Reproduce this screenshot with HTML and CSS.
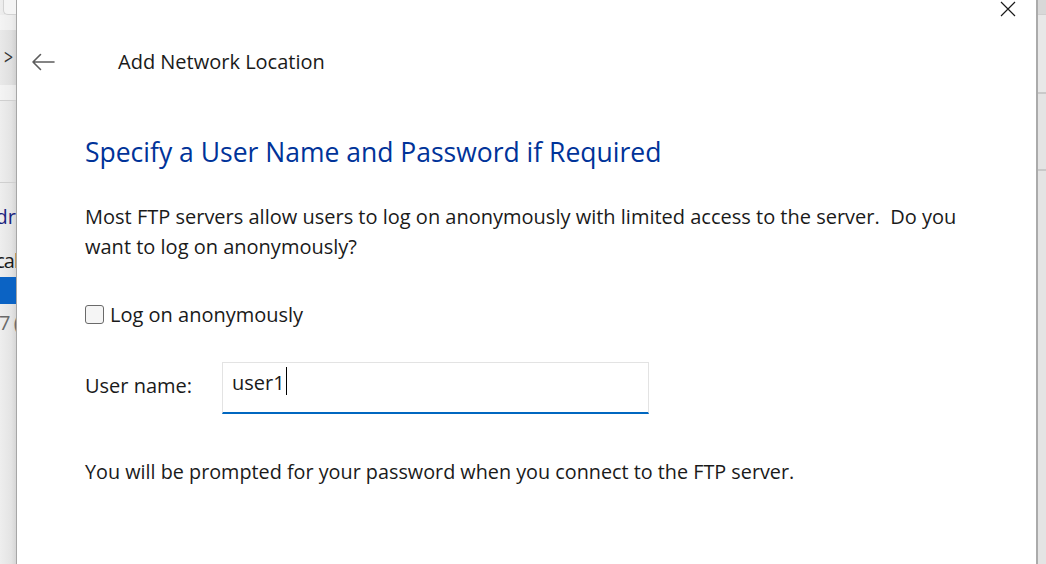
FILE: index.html
```html
<!DOCTYPE html>
<html lang="en">
<head>
<meta charset="utf-8">
<title>Add Network Location</title>
<link rel="stylesheet" href="styles.css">
</head>
<body>
<div class="screen">
  <div class="bg-left">
    <div class="bl-addr"></div>
    <div class="bl-gap"></div>
    <div class="bl-nav"><span class="bl-chev">&gt;</span></div>
    <div class="bl-gap2"></div>
    <div class="bl-tool"></div>
    <div class="bl-list">
      <div class="bl-item bl-link">dr</div>
      <div class="bl-item bl-cal">cal</div>
      <div class="bl-sel"></div>
      <div class="bl-item bl-grey">7 (</div>
    </div>
  </div>
  <div class="dialog">
    <button class="close" aria-label="Close">
      <svg width="16" height="16" viewBox="0 0 16 16"><path d="M1 1 L15 15 M15 1 L1 15" stroke="#1a1a1a" stroke-width="1.2" fill="none"/></svg>
    </button>
    <div class="header">
      <span class="back">
        <svg width="24" height="18" viewBox="0 0 24 18"><path d="M2 9 H23 M9.5 1.5 L2 9 L9.5 16.5" stroke="#5c5c5c" stroke-width="1.6" fill="none" stroke-linejoin="round" stroke-linecap="round"/></svg>
      </span>
      <span class="title">Add Network Location</span>
    </div>
    <div class="content">
      <h1 class="heading">Specify a User Name and Password if Required</h1>
      <p class="para">Most FTP servers allow users to log on anonymously with limited access to the server.&nbsp; Do you<br>want to log on anonymously?</p>
      <label class="check-row"><span class="checkbox"></span><span>Log on anonymously</span></label>
      <div class="user-row">
        <span class="label">User name:</span>
        <div class="textbox"><span class="value">user1</span><span class="caret"></span></div>
      </div>
      <p class="footer-text">You will be prompted for your password when you connect to the FTP server.</p>
    </div>
  </div>
  <div class="bg-right">
    <div class="br-a"></div>
    <div class="br-b"></div>
    <div class="br-c"></div>
  </div>
</div>
</body>
</html>
```
FILE: styles.css
```css
html, body {
  margin: 0;
  padding: 0;
  width: 1046px;
  height: 564px;
  overflow: hidden;
  background: #ffffff;
  font-family: "Open Sans", "Noto Sans", "Liberation Sans", sans-serif;
  color: #1a1a1a;
}

.screen {
  display: flex;
  width: 1046px;
  height: 564px;
}

/* background window, left edge */
.bg-left {
  width: 16px;
  flex: none;
  background: linear-gradient(to right, #eeeeee, #e4e4e4 70%, #d6d6d6);
  display: flex;
  flex-direction: column;
  overflow: hidden;
}
.bl-addr {
  height: 14px;
  margin-left: 3px;
  background: #f4f4f4;
  border: 1px solid #d2d2d2;
  border-top: none;
  border-right: none;
  border-bottom-left-radius: 5px;
}
.bl-gap {
  height: 15px;
  background: rgba(255, 255, 255, 0.35);
}
.bl-nav {
  height: 55px;
  display: flex;
  align-items: center;
  background: rgba(0, 0, 0, 0.02);
}
.bl-chev {
  font-size: 21px;
  line-height: 24px;
  color: #333;
  margin-left: 4px;
  margin-top: -1px;
  transform: scaleX(0.75);
  transform-origin: left center;
}
.bl-gap2 {
  height: 15px;
  background: rgba(255, 255, 255, 0.35);
  border-bottom: 1px solid #cfcfcf;
}
.bl-tool {
  height: 81px;
  border-bottom: 1px solid #cfcfcf;
}
.bl-list {
  padding-top: 22px;
  display: flex;
  flex-direction: column;
  align-items: flex-end;
}
.bl-item {
  height: 24px;
  line-height: 24px;
  font-size: 20px;
  white-space: nowrap;
  color: #1a1a1a;
}
.bl-link { color: #1a237e; }
.bl-cal { margin-top: 20px; margin-right: -2px; letter-spacing: -1px; }
.bl-sel {
  align-self: stretch;
  height: 27px;
  background: #0b63c4;
  margin-top: 4px;
}
.bl-grey { color: #6a6a6a; align-self: flex-start; margin-top: 7px; margin-left: -1px; letter-spacing: -1px; }

/* dialog */
.dialog {
  position: relative;
  flex: 1;
  background: #ffffff;
  border-left: 1px solid #a6a6a6;
  border-right: 2px solid #ababab;
}
.close {
  position: absolute;
  top: 0;
  right: 19px;
  width: 18px;
  height: 18px;
  padding: 1px 0 0 0;
  border: none;
  background: none;
}
.header {
  height: 124px;
  display: flex;
  align-items: center;
  padding-left: 14px;
}
.back {
  width: 24px;
  height: 18px;
  display: flex;
}
.title {
  margin-left: 63px;
  font-size: 20px;
  color: #1a1a1a;
  margin-top: -2px;
}
.content {
  padding-left: 68px;
}
.heading {
  margin: 0;
  height: 56px;
  line-height: 56px;
  font-size: 26.5px;
  font-weight: normal;
  color: #003399;
}
.para {
  margin: 22px 0 0 0;
  font-size: 20px;
  line-height: 30px;
  color: #1a1a1a;
}
.check-row {
  margin-top: 37px;
  height: 30px;
  display: flex;
  align-items: center;
  gap: 6px;
  font-size: 20px;
}
.checkbox {
  width: 17px;
  height: 17px;
  border: 1px solid #6a6a6a;
  border-radius: 3px;
  background: #f5f5f5;
  flex: none;
}
.user-row {
  margin-top: 33px;
  display: flex;
  align-items: flex-start;
}
.label {
  width: 137px;
  font-size: 20px;
  line-height: 30px;
  margin-top: 9px;
}
.textbox {
  width: 416px;
  height: 43px;
  border: 1px solid #e3e3e3;
  border-bottom: 2px solid #0067c0;
  padding: 6px 0 0 9px;
  display: flex;
  align-items: flex-start;
  box-sizing: content-box;
}
.value {
  font-size: 20px;
  line-height: 28px;
  color: #1a1a1a;
}
.caret {
  width: 1px;
  height: 28px;
  background: #000;
  margin-left: 1px;
  margin-top: -2px;
}
.footer-text {
  margin: 43px 0 0 0;
  font-size: 19.8px;
  line-height: 30px;
}

/* background window, right edge */
.bg-right {
  width: 8px;
  flex: none;
  background: #e4e4e4;
  display: flex;
  flex-direction: column;
}
.br-a { height: 14px; background: #d8d8d8; border-bottom: 1px solid #cfcfcf; }
.br-b { height: 77px; background: #e8e8e8; border-bottom: 2px solid #c9c9c9; }
.br-c { height: 75px; border-bottom: 2px solid #c9c9c9; }
```
